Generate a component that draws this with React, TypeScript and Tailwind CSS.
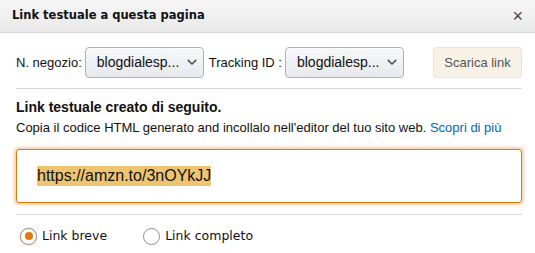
import { useState } from "react";

function Chevron() {
  return (
    <svg width="10" height="7" viewBox="0 0 10 7" className="text-[#555]">
      <path d="M1.3 1.3 5 5l3.7-3.7" fill="none" stroke="currentColor" strokeWidth="1.7" strokeLinecap="round" strokeLinejoin="round" />
    </svg>
  );
}

function Dropdown({ value }: { value: string }) {
  return (
    <div className="flex h-[31px] w-[119px] items-center justify-between rounded-[4px] border border-[#adb1b8] bg-gradient-to-b from-[#f7f8fa] to-[#e7e9ec] pl-[11px] pr-[6px] shadow-[0_1px_0_rgba(255,255,255,0.6)_inset]">
      <span className="text-[14px] text-[#111]">{value}</span>
      <Chevron />
    </div>
  );
}

function Radio({ checked, label }: { checked: boolean; label: string }) {
  return (
    <label className="flex items-center gap-[5px]">
      <span
        className={`flex h-[17px] w-[17px] items-center justify-center rounded-full border ${
          checked ? "border-[#8d8d8d] shadow-[0_0_2px_rgba(228,121,17,0.5)]" : "border-[#8d8d8d]"
        } bg-white`}
      >
        {checked ? <span className="h-[8px] w-[8px] rounded-full bg-[#e47911]" /> : null}
      </span>
      <span className="font-['DejaVu_Sans',sans-serif] text-[12.5px] text-[#111]">{label}</span>
    </label>
  );
}

export default function App() {
  const [mode] = useState<"short" | "full">("short");

  return (
    <div className="h-[253px] w-[535px] overflow-hidden bg-white font-['Liberation_Sans',Arial,sans-serif] text-[#111]">
      <div className="flex h-[33px] items-center justify-between border-b border-[#d5d5d5] bg-gradient-to-b from-[#f6f6f6] to-[#e9e9e9] pl-[12px] pr-[12px]">
        <span className="font-['DejaVu_Sans',sans-serif] text-[11.5px] font-bold text-[#111]">
          Link testuale a questa pagina
        </span>
        <span className="text-[18px] leading-none text-[#444]">×</span>
      </div>

      <div className="pl-[16px] pr-[13px]">
        <div className="mt-[14px] flex items-center">
          <span className="mr-[3px] text-[13px]">N. negozio:</span>
          <Dropdown value="blogdialesp..." />
          <span className="ml-[5px] mr-[3px] text-[13px]">Tracking ID :</span>
          <Dropdown value="blogdialesp..." />
          <button className="ml-auto h-[31px] w-[89px] rounded-[3px] border border-[#eee4d2] bg-[#f7f1e6] text-[13px] text-[#555]">
            Scarica link
          </button>
        </div>

        <div className="mt-[10px] border-t border-[#d8d8d8]" />

        <div className="mt-[9px] text-[14px] font-bold leading-[18px]">Link testuale creato di seguito.</div>
        <div className="mt-[3px] text-[13px] leading-[17px]">
          Copia il codice HTML generato and incollalo nell'editor del tuo sito web.{" "}
          <a className="text-[#0066c0]">Scopri di più</a>
        </div>

        <div className="mt-[13px] flex h-[54px] items-center rounded-[3px] border border-[#e77600] pl-[20px] shadow-[0_0_3px_2px_rgba(228,121,17,0.35)]">
          <span className="bg-[#edc46f] text-[16px] leading-[20px] text-[#111]">https://amzn.to/3nOYkJJ</span>
        </div>

        <div className="mt-[11px] border-t border-[#d8d8d8]" />

        <div className="mt-[12px] flex items-center gap-[36px] pl-[4px]">
          <Radio checked={mode === "short"} label="Link breve" />
          <Radio checked={mode === "full"} label="Link completo" />
        </div>
      </div>
    </div>
  );
}
